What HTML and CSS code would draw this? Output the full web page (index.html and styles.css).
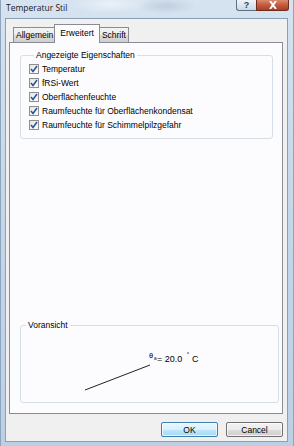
FILE: index.html
```html
<!DOCTYPE html>
<html lang="de">
<head>
    <meta charset="UTF-8">
    <title>Temperatur Stil</title>
    <link rel="stylesheet" href="styles.css">
</head>
<body>

    <div class="window">

        <!-- Title bar -->
        <div class="titlebar">
            <span class="title">Temperatur Stil</span>
            <div class="caption-buttons">
                <span class="cap-btn help">?</span>
                <span class="cap-btn close">
                    <svg width="10" height="8" viewBox="0 0 10 8">
                        <path d="M2 0 L8 8 M8 0 L2 8" stroke="#fff" stroke-width="2"/>
                    </svg>
                </span>
            </div>
        </div>

        <div class="client">

            <!-- Tabs -->
            <div class="tabs">
                <span class="tab">Allgemein</span>
                <span class="tab active">Erweitert</span>
                <span class="tab">Schrift</span>
            </div>

            <div class="panel">
                <fieldset class="group props">
                    <legend>Angezeigte Eigenschaften</legend>
                    <label class="check"><span class="box"><svg width="8" height="8" viewBox="0 0 8 8"><path d="M1 4 L3 6.5 L7 1" fill="none" stroke="#2d4f8c" stroke-width="1.5"/></svg></span>Temperatur</label>
                    <label class="check"><span class="box"><svg width="8" height="8" viewBox="0 0 8 8"><path d="M1 4 L3 6.5 L7 1" fill="none" stroke="#2d4f8c" stroke-width="1.5"/></svg></span>fRSi-Wert</label>
                    <label class="check"><span class="box"><svg width="8" height="8" viewBox="0 0 8 8"><path d="M1 4 L3 6.5 L7 1" fill="none" stroke="#2d4f8c" stroke-width="1.5"/></svg></span>Oberflächenfeuchte</label>
                    <label class="check"><span class="box"><svg width="8" height="8" viewBox="0 0 8 8"><path d="M1 4 L3 6.5 L7 1" fill="none" stroke="#2d4f8c" stroke-width="1.5"/></svg></span>Raumfeuchte für Oberflächenkondensat</label>
                    <label class="check"><span class="box"><svg width="8" height="8" viewBox="0 0 8 8"><path d="M1 4 L3 6.5 L7 1" fill="none" stroke="#2d4f8c" stroke-width="1.5"/></svg></span>Raumfeuchte für Schimmelpilzgefahr</label>
                </fieldset>

                <fieldset class="group preview">
                    <legend>Voransicht</legend>
                    <svg class="preview-canvas" width="257" height="72" viewBox="0 0 257 72">
                        <line x1="64" y1="60" x2="129" y2="35" stroke="#222" stroke-width="1"/>
                        <text x="128" y="28" font-size="7.5">θ</text>
                        <text x="133" y="30" font-size="4.5">a</text>
                        <text x="136" y="32" font-size="9">= 20.0</text>
                        <text x="166" y="28" font-size="7">˚</text>
                        <text x="171" y="32" font-size="9">C</text>
                    </svg>
                </fieldset>
            </div>

            <!-- Dialog buttons -->
            <div class="buttons">
                <button class="btn default">OK</button>
                <button class="btn">Cancel</button>
            </div>
        </div>
    </div>

</body>
</html>
```

FILE: styles.css
```css
* {
    margin: 0;
    padding: 0;
    box-sizing: border-box;
}

body {
    width: 294px;
    height: 446px;
    overflow: hidden;
    font-family: 'Liberation Sans', Arial, sans-serif;
    font-size: 8.5px;
    color: #000;
}

/* Glass window frame */
.window {
    width: 294px;
    height: 446px;
    padding: 0 5px 4px 4px;
    display: flex;
    flex-direction: column;
    background:
        radial-gradient(ellipse 40px 10px at 110px 4px, rgba(255, 255, 255, 0.5), transparent),
        radial-gradient(ellipse 30px 8px at 165px 6px, rgba(150, 170, 195, 0.35), transparent),
        linear-gradient(180deg, #d6e3f0 0%, #c6d8ea 40%, #bcd0e5 100%);
    border-left: 1px solid #8ea5bd;
    border-right: 1px solid #8ea5bd;
}

.titlebar {
    height: 18px;
    display: flex;
    justify-content: space-between;
    align-items: flex-start;
}

.title {
    font-family: 'Open Sans', 'Liberation Sans', sans-serif;
    font-size: 8.5px;
    line-height: 16px;
    padding-left: 1px;
    color: #1a1a1a;
}

.caption-buttons {
    display: flex;
    margin-right: -1px;
}

.cap-btn {
    height: 11px;
    display: flex;
    align-items: center;
    justify-content: center;
    border: 1px solid #5f7188;
    border-top: none;
}

.help {
    width: 20px;
    font-size: 9px;
    font-weight: bold;
    color: #2d3e55;
    background: linear-gradient(180deg, #eef3f8, #cbd8e6);
    border-radius: 0 0 0 3px;
    border-right: none;
}

.close {
    width: 33px;
    background: linear-gradient(180deg, #d98b72 0%, #c55a3c 50%, #a93f26 100%);
    border-color: #6e2d1f;
    border-radius: 0 0 3px 0;
}

/* Client area */
.client {
    flex: 1;
    background: #f0f0f0;
    padding: 5px 4px 0 3px;
    border: 1px solid #8aa0b8;
    display: flex;
    flex-direction: column;
}

.tabs {
    display: flex;
    align-items: flex-end;
    height: 18px;
    margin-left: 4px;
    position: relative;
    z-index: 1;
}

.tab {
    height: 15px;
    line-height: 14px;
    padding: 0 2px;
    border: 1px solid #898c95;
    border-bottom: none;
    background: linear-gradient(180deg, #f4f4f4 0%, #ebebeb 50%, #dcdcdc 51%, #cfcfcf 100%);
    margin-right: -1px;
}

.tab.active {
    height: 19px;
    line-height: 16px;
    padding: 0 5px;
    margin: 0 -1px -1px -1px;
    background: #fcfcfe;
    position: relative;
    z-index: 2;
}

.panel {
    height: 372px;
    background: #fcfcfe;
    border: 1px solid #898c95;
    display: flex;
    flex-direction: column;
    padding: 7px 9px 10px 10px;
}

.group {
    border: 1px solid #d5dfe5;
    border-radius: 3px;
}

.group legend {
    margin-left: 5px;
    padding: 0 2px;
    line-height: 10px;
}

.props {
    padding: 2px 8px 6px 8px;
}

.check {
    display: flex;
    align-items: center;
    gap: 3px;
    height: 14px;
}

.box {
    width: 10px;
    height: 10px;
    border: 1px solid #8e8f8f;
    background: linear-gradient(135deg, #e6e6e6, #fbfbfb);
    display: flex;
    align-items: center;
    justify-content: center;
}

.preview {
    margin-top: auto;
    height: 83px;
}

.preview-canvas {
    display: block;
    font-family: 'Liberation Sans', Arial, sans-serif;
}

/* Buttons */
.buttons {
    display: flex;
    justify-content: flex-end;
    gap: 8px;
    margin-top: 8px;
}

.btn {
    width: 57px;
    height: 15px;
    font-family: 'Liberation Sans', Arial, sans-serif;
    font-size: 8.5px;
    border: 1px solid #707070;
    border-radius: 2px;
    background: linear-gradient(180deg, #f2f2f2 0%, #ebebeb 50%, #dddddd 51%, #cfcfcf 100%);
    box-shadow: inset 0 0 0 1px rgba(255, 255, 255, 0.7);
}

.btn.default {
    border-color: #3c7fb1;
    background: linear-gradient(180deg, #eaf6fd 0%, #d9f0fc 50%, #bee6fd 51%, #a7d9f5 100%);
}
```
